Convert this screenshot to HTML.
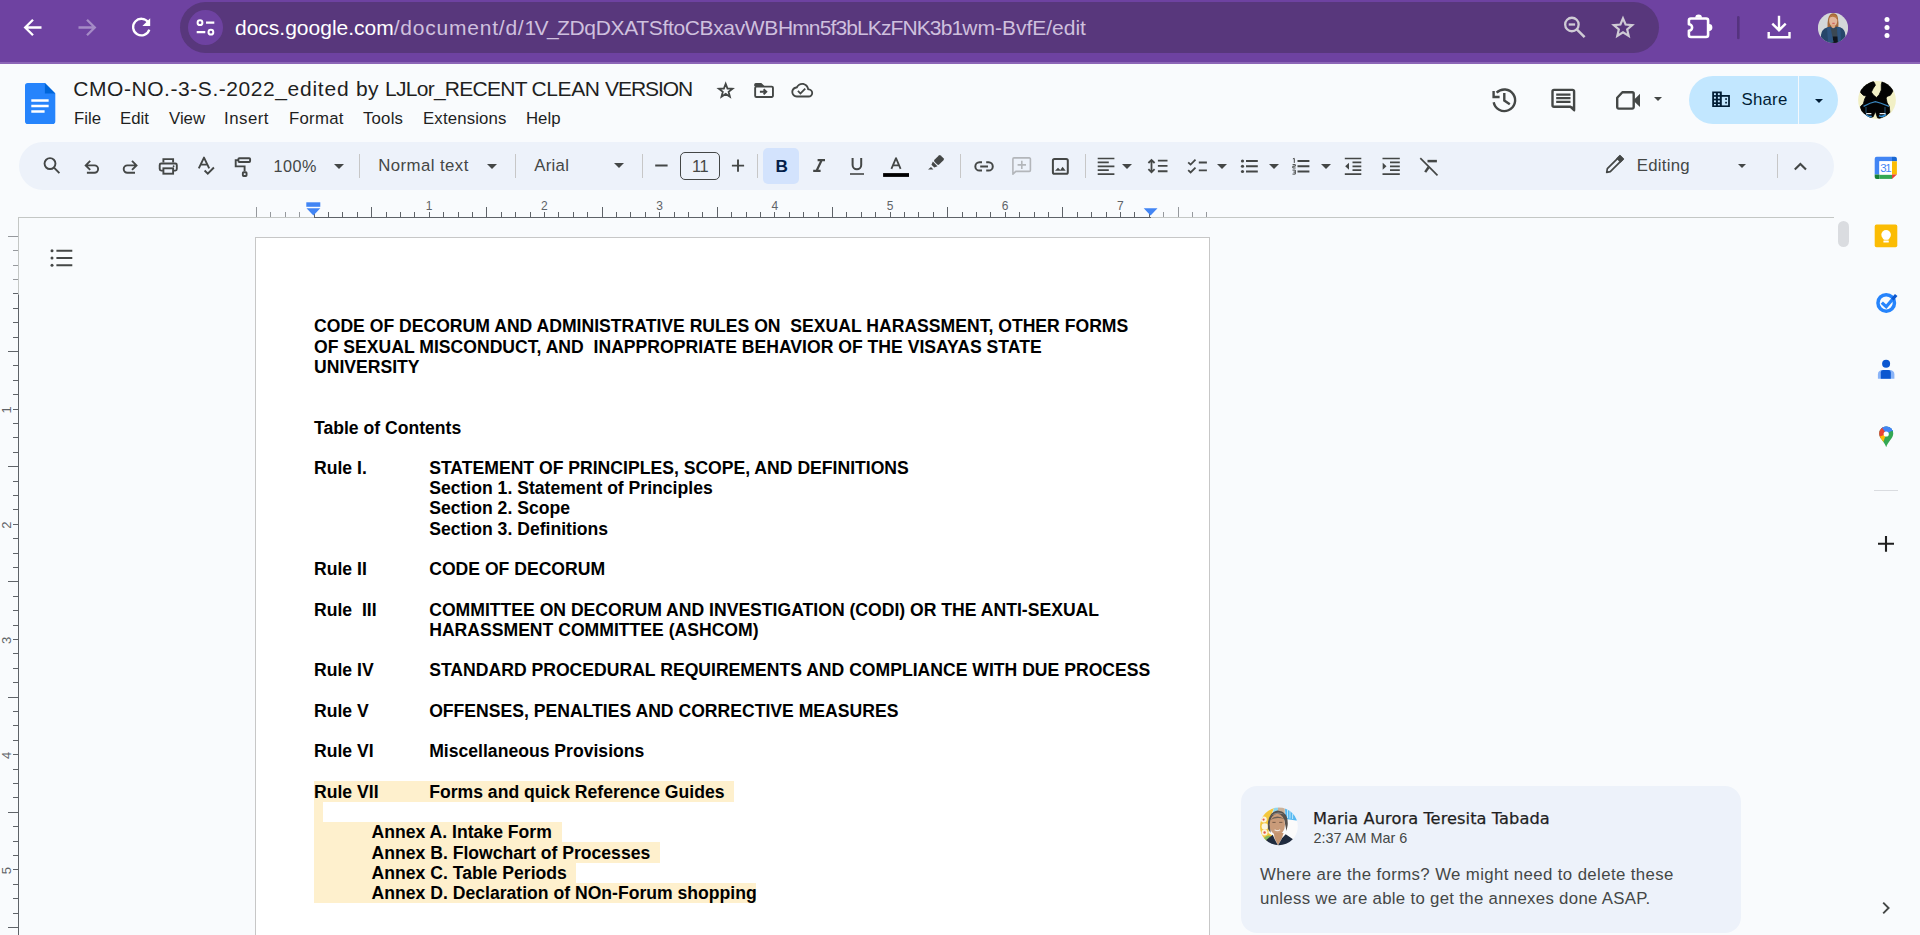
<!DOCTYPE html>
<html lang="en">
<head>
<meta charset="utf-8">
<title>CMO-NO.-3-S.-2022_edited by LJLor_RECENT CLEAN VERSION - Google Docs</title>
<style>
*{box-sizing:border-box;margin:0;padding:0}
html,body{width:1920px;height:935px;overflow:hidden;background:#f9fbfd;font-family:"Liberation Sans",sans-serif;color:#1f1f1f}
.abs{position:absolute}
svg{display:block;overflow:visible}
/* ---------- browser chrome ---------- */
#chrome{position:absolute;left:0;top:0;width:1920px;height:62px;background:#6e42a1}
#chromeline{position:absolute;left:0;top:62px;width:1920px;height:2px;background:#8c66b7}
#omni{position:absolute;left:180px;top:2px;width:1479px;height:51px;border-radius:26px;background:#58377c}
#siteinfo{position:absolute;left:188px;top:10px;width:35px;height:35px;border-radius:50%;background:#6e42a1}
#url{position:absolute;left:235px;top:14px;font-size:21px;line-height:28px;white-space:nowrap;color:#fff;letter-spacing:0}
#url span{color:#cfc0de}#url i{font-style:normal}
/* ---------- docs header ---------- */
#title{position:absolute;left:73.3px;top:75px;font-size:21px;white-space:pre;line-height:28px;white-space:nowrap;color:#1f1f1f}
.menu{position:absolute;top:108.8px;font-size:16.8px;line-height:20px;color:#1f1f1f;white-space:nowrap}
/* ---------- toolbar ---------- */
#tb{position:absolute;left:19px;top:142px;width:1815px;height:48px;border-radius:24px;background:#edf2fa}
.tbt{position:absolute;font-size:16.8px;line-height:20px;color:#444746;white-space:nowrap}
.sep{position:absolute;top:154px;width:1px;height:24px;background:#c7c7c7}
.caret{position:absolute;width:0;height:0;border-left:5px solid transparent;border-right:5px solid transparent;border-top:5px solid #444746}
/* ---------- document ---------- */
#page{position:absolute;left:255px;top:237px;width:955px;height:720px;background:#fff;border:1px solid #c7c7c7}
.dl{position:absolute;font-weight:bold;font-size:17.6px;line-height:20px;color:#000;white-space:pre}
.hl{position:absolute;background:#fef0cd}
/* ---------- comment ---------- */
#cbox{position:absolute;left:1241px;top:786px;width:500px;height:147px;border-radius:16px;background:#edf2fa}
</style>
</head>
<body>
<!-- ================= BROWSER CHROME ================= -->
<div id="chrome"></div>
<div id="chromeline"></div>
<div id="omni"></div>
<div id="siteinfo"></div>
<div id="url">docs.google.com<span><i style="letter-spacing:0.774px">/document/d/</i><i style="letter-spacing:-1.592px">1V_</i><i style="letter-spacing:-0.348px">ZDqDXATSftoCBxavWB</i><i style="letter-spacing:-0.884px">Hmn5f3bLKzFNK3b1</i><i style="letter-spacing:-0.000px">wm-BvfE/edit</i></span></div>
<svg class="abs" style="left:0;top:0" width="1920" height="64" viewBox="0 0 1920 64" fill="none" stroke-linecap="round" stroke-linejoin="round">
  <!-- back -->
  <path d="M41.5 27.5H25.5M33 19.7L25.2 27.5L33 35.3" stroke="#fff" stroke-width="2.3" stroke-linecap="butt" stroke-linejoin="miter"/>
  <!-- forward (disabled) -->
  <path d="M78.5 27.5H94.5M87 19.7L94.8 27.5L87 35.3" stroke="#a58bc6" stroke-width="2.3" stroke-linecap="butt" stroke-linejoin="miter"/>
  <!-- reload -->
  <path d="M148.2 22.3A8.3 8.3 0 1 0 149.3 29.6" stroke="#fff" stroke-width="2.3" stroke-linecap="butt"/>
  <path d="M150.2 18.2V26H142.4Z" fill="#fff" stroke="none"/>
  <!-- site info (tune) -->
  <circle cx="200" cy="22.7" r="2.4" stroke="#fff" stroke-width="2"/>
  <path d="M206 22.7H214.3M196.7 32.2H205.3" stroke="#fff" stroke-width="2.2" stroke-linecap="butt"/>
  <circle cx="210.9" cy="32.2" r="2.4" stroke="#fff" stroke-width="2"/>
  <!-- zoom out -->
  <circle cx="1571.9" cy="24.5" r="6.75" stroke="#cfcbd5" stroke-width="2.3"/>
  <path d="M1576.8 29.4L1584.6 37.2" stroke="#cfcbd5" stroke-width="2.5" stroke-linecap="butt"/>
  <path d="M1568.7 24.5H1575.1" stroke="#cfcbd5" stroke-width="2.3" stroke-linecap="butt"/>
  <!-- bookmark star -->
  <path d="M1623.0 18.4L1625.6 24.5L1632.2 25.1L1627.2 29.4L1628.7 35.9L1623.0 32.4L1617.3 35.9L1618.8 29.4L1613.8 25.1L1620.4 24.5Z" stroke="#cfcbd5" stroke-width="2.2" stroke-linejoin="miter" stroke-miterlimit="10"/>
  <!-- extensions puzzle -->
  <path d="M1688.9 24.3V20.5a2 2 0 0 1 2-2H1706.1a2 2 0 0 1 2 2V35a2 2 0 0 1-2 2H1690.9a2 2 0 0 1-2-2V30.7a3.2 3.2 0 0 0 0-6.4z" stroke="#fff" stroke-width="2.6"/><path d="M1695.2 17.8a3.4 3.4 0 0 1 6.8 0zM1709 24.1a3.4 3.4 0 0 1 0 6.8z" fill="#fff" stroke="none"/>
  <!-- separator -->
  <path d="M1738.3 17.2V38" stroke="#55337e" stroke-width="2.6"/>
  <!-- download -->
  <path d="M1779 15.8V29.5M1772.3 23.6L1779 30.2L1785.7 23.6" stroke="#fff" stroke-width="2.4" stroke-linecap="butt" stroke-linejoin="miter"/>
  <path d="M1768.7 32V37.3H1789.5V32" stroke="#fff" stroke-width="2.4" stroke-linecap="butt" stroke-linejoin="miter"/>
  <!-- menu dots -->
  <circle cx="1887" cy="19.6" r="2.5" fill="#fff"/><circle cx="1887" cy="27.6" r="2.5" fill="#fff"/><circle cx="1887" cy="35.6" r="2.5" fill="#fff"/>
  <!-- profile avatar -->
  <defs><clipPath id="av1"><circle cx="15" cy="14.900" r="15.100"/></clipPath></defs>
  <g clip-path="url(#av1)" transform="translate(1818 13)">
    <rect x="0" y="0" width="30" height="30" fill="#d4d7d9"/>
    <path d="M9.600 14.800Q9 4 12.500 1.200Q15 -.500 18 1Q21 3 20.300 14.800Z" fill="#a4683b"/>
    <ellipse cx="15.200" cy="7.700" rx="4.100" ry="5.600" fill="#e2b59b"/>
    <path d="M11 5.500Q12 1.500 16 1.800Q19 2.500 19.400 7Q17.500 3.500 14.500 3.800Q12 4 11 5.500Z" fill="#b5753f"/>
    <rect x="13.400" y="11.500" width="3.600" height="4" fill="#d9a583"/>
    <path d="M14.700 10.300H16.300" stroke="#c6353f" stroke-width="0.800"/>
    <path d="M3 30V22Q3.500 16 9 14.500L12.500 13.600L15.200 15.500L18.500 13.600L22.500 14.500Q27 16 27.400 22V30Z" fill="#27466a"/>
    <path d="M12.200 14.500Q15.200 16.500 19 14.500L20 24V30H14.500L13.500 24Z" fill="#3b4853"/>
    <path d="M14.600 23.500H20V30H15.500Z" fill="#10151c"/>
    <path d="M9 14.500L12.400 14L15.500 29H10Z" fill="#2f5480"/>
    <path d="M22.500 14.500L19 14L19.800 29H23Z" fill="#2f5480"/>
  </g>

</svg>


<!-- ================= DOCS HEADER ================= -->
<!-- docs logo -->
<svg class="abs" style="left:25.2px;top:83px" width="31" height="42" viewBox="0 0 31 42">
  <path d="M2.800 0H19.900L30.300 10.500V38.300A2.800 2.800 0 0 1 27.500 41.100H2.800A2.800 2.800 0 0 1 0 38.300V2.800A2.800 2.800 0 0 1 2.800 0Z" fill="#2684fc"/>
  <path d="M19.900 0L30.300 10.500H19.900Z" fill="#0066da"/>
  <path d="M6.300 17.600H23.650M6.300 22.900H23.650M6.300 28.400H19.600" stroke="#fff" stroke-width="2.500"/>
</svg>
<div id="title"><span style="letter-spacing:0.555px">CMO-NO.-3-S.-2022_</span><span style="letter-spacing:0.777px">edited </span><span style="letter-spacing:0.328px">by </span><span style="letter-spacing:-0.732px">LJLor_RECENT </span><span style="letter-spacing:-0.393px">CLEAN </span><span style="letter-spacing:-1.076px">VERSION</span></div>
<svg class="abs" style="left:0;top:64px" width="1920" height="78" viewBox="0 64 1920 78" fill="none" stroke="#444746" stroke-width="1.8" stroke-linejoin="round">
  <!-- star -->
  <path d="M725.7 83.7L727.5 88.5L732.5 88.7L728.6 91.8L729.9 96.7L725.7 93.9L721.5 96.7L722.8 91.8L718.9 88.7L723.9 88.5Z" stroke-linejoin="miter" stroke-miterlimit="10"/>
  <!-- move to folder -->
  <path d="M756.4 86.65H771.7A1.25 1.25 0 0 1 772.95 87.9V95.7A1.25 1.25 0 0 1 771.7 96.95H756.4A1.25 1.25 0 0 1 755.15 95.7V87.9A1.25 1.25 0 0 1 756.4 86.65Z" stroke-width="1.9"/>
  <path d="M754.2 87.5V84.4A1.5 1.5 0 0 1 755.7 82.9H761.3L764.4 86H754.2Z" fill="#444746" stroke="none"/>
  <path d="M759.9 91.8H766M763.6 89.2L766.3 91.8L763.6 94.4" stroke-width="1.9" stroke-linejoin="miter"/>
  <!-- cloud done -->
  <g transform="translate(791.4 79.3) scale(0.905)" fill="#444746" stroke="none"><path d="M19.35 10.04C18.67 6.59 15.64 4 12 4 9.11 4 6.6 5.64 5.35 8.04 2.34 8.36 0 10.91 0 14c0 3.31 2.69 6 6 6h13c2.76 0 5-2.24 5-5 0-2.64-2.05-4.78-4.65-4.96zM19 18H6c-2.21 0-4-1.79-4-4 0-2.05 1.53-3.76 3.56-3.97l1.07-.11.5-.95C8.08 7.14 9.94 6 12 6c2.62 0 4.88 1.86 5.39 4.43l.3 1.5 1.53.11c1.56.1 2.78 1.41 2.78 2.96 0 1.65-1.35 3-3 3zm-9-3.82l-2.09-2.09L6.5 13.5 10 17l6.01-6.01-1.41-1.41z"/></g>
</svg>
<div class="menu" style="left:74px">File</div>
<div class="menu" style="left:120px">Edit</div>
<div class="menu" style="left:169px">View</div>
<div class="menu" style="left:224px;letter-spacing:.5px">Insert</div>
<div class="menu" style="left:289px;letter-spacing:.25px">Format</div>
<div class="menu" style="left:363px;letter-spacing:.2px">Tools</div>
<div class="menu" style="left:423px;letter-spacing:.15px">Extensions</div>
<div class="menu" style="left:526px">Help</div>
<svg class="abs" style="left:1480px;top:64px" width="440" height="78" viewBox="1480 64 440 78" fill="none" stroke="#444746" stroke-width="2.4">
  <!-- history -->
  <path d="M1496.6 92.7A10.8 10.8 0 1 1 1493.7 102.2"/>
  <path d="M1493.6 91V97H1499.6" stroke-linejoin="miter"/>
  <path d="M1504.3 92.9V100.6L1509.8 104.2"/>
  <!-- comments -->
  <path d="M1554 89.9H1572.6A1.5 1.5 0 0 1 1574.1 91.4V110.2L1570.6 106.8H1554A1.5 1.5 0 0 1 1552.5 105.3V91.4A1.5 1.5 0 0 1 1554 89.9Z" stroke-linejoin="round"/>
  <path d="M1574.6 111.4L1569.6 106.4H1574.6Z" fill="#444746" stroke="none"/>
  <path d="M1556.2 94.6H1570.5M1556.2 98.2H1570.5M1556.2 101.8H1570.5" stroke-width="2.2"/>
  <!-- meet camera -->
  <path d="M1622.4 92.2H1632.2A1.5 1.5 0 0 1 1633.7 93.7V107.1A1.5 1.5 0 0 1 1632.2 108.6H1618.7A1.5 1.5 0 0 1 1617.2 107.1V97.8Z" stroke-linejoin="round"/>
  <path d="M1640 93.8V107.1L1633.2 100.4Z" fill="#444746" stroke="none"/>
  <path d="M1654 97H1662L1658 101.1Z" fill="#444746" stroke="none"/>
</svg>
<!-- share button -->
<div class="abs" style="left:1689px;top:76px;width:149px;height:48px;border-radius:24px;background:#c2e7ff"></div>
<div class="abs" style="left:1798px;top:76px;width:1px;height:48px;background:#f4f8fc"></div>
<svg class="abs" style="left:1712px;top:91px" width="18" height="16" viewBox="0 0 18 16">
  <path d="M0.2 0.4H9.8V4H17.9V15.9H0.2Z" fill="#001d35"/>
  <g fill="#c2e7ff">
    <rect x="2" y="2.2" width="1.9" height="1.9"/><rect x="5.9" y="2.2" width="1.9" height="1.9"/>
    <rect x="2" y="5.8" width="1.9" height="1.9"/><rect x="5.9" y="5.8" width="1.9" height="1.9"/>
    <rect x="2" y="9.4" width="1.9" height="1.9"/><rect x="5.9" y="9.4" width="1.9" height="1.9"/>
    <rect x="2" y="13" width="1.9" height="1.4"/><rect x="5.9" y="13" width="1.9" height="1.4"/>
    <rect x="9.8" y="5.8" width="6.3" height="8.6"/>
  </g>
  <g fill="#001d35"><rect x="13.2" y="7.2" width="1.7" height="1.7"/><rect x="13.2" y="10.8" width="1.7" height="1.7"/></g>
</svg>
<div class="abs" style="left:1741.5px;top:90.3px;font-size:16.8px;line-height:20px;letter-spacing:.25px;color:#001d35;white-space:nowrap">Share</div>
<div class="caret" style="left:1815.4px;top:98.8px;border-left-width:4px;border-right-width:4px;border-top:4.4px solid #001d35"></div>
<!-- account avatar -->
<svg class="abs" style="left:1858px;top:81px" width="38" height="38" viewBox="0 0 38 38">
  <defs><clipPath id="av2"><circle cx="19" cy="19" r="18.9"/></clipPath></defs>
  <g clip-path="url(#av2)">
    <rect width="38" height="38" fill="#f2f0c6"/>
    <path d="M14.7 0L2.7 7V11.7L5.3 14.3L8.3 15.1L6.7 18L5.3 22.9L2.4 25.6L3.5 31L7.2 34.1L11.5 36.8L15.2 35.7L17.4 30.4L19.5 36.8L21.7 37.6L28 34.6L31.8 31.4L31.3 25.6L29.1 21.8L28.1 17L29.1 15.4L32.3 14.3L35 10L33 5L24.3 0L23.3 3.6V9L21.1 13.8L18.4 16.5L15.2 13.8L13.4 11.1L15.2 7.4L17.4 4.2L16.3 1.5Z" fill="#030303" stroke="#030303" stroke-width="0.8" stroke-linejoin="round"/>
    <path d="M5.6 25.4L12 22.3L17.4 20.6L23 22.3L31 25.4" stroke="#3a86bd" stroke-width="1.2" fill="none"/>
    <path d="M8 26V32M27 26V32" stroke="#2d6a96" stroke-width="0.8" fill="none"/>
    <path d="M7.5 33.6Q10.5 36.6 13.6 35.2M21 34.6Q24.5 36.8 28 33.4" stroke="#2f8fd6" stroke-width="1.7" fill="none"/>
    <path d="M8.2 32.6H13.4M21.6 32.6H27.6" stroke="#e8edf2" stroke-width="1.3" fill="none"/>
  </g>
</svg>


<!-- ================= TOOLBAR ================= -->
<div id="tb"></div>
<div class="abs" style="left:763px;top:148px;width:36px;height:36px;border-radius:5px;background:#d3e3fd"></div>
<svg class="abs" style="left:19px;top:142px" width="1815" height="48" viewBox="19 142 1815 48" fill="none" stroke="#444746" stroke-width="1.9">
  <!-- search -->
  <circle cx="50" cy="163.6" r="5.45"/><path d="M54 167.6L59.4 173.2"/>
  <!-- undo -->
  <path d="M90.2 160.9L85.7 165.4L90.2 169.9M86 165.4H94.4A3.7 3.7 0 0 1 94.4 172.8H86.9"/>
  <!-- redo -->
  <path d="M132 160.9L136.5 165.4L132 169.9M136.2 165.4H127.4A3.7 3.7 0 0 0 127.4 172.8H135"/>
  <!-- print -->
  <path d="M163.4 162.6V159.1H173.1V162.6"/>
  <path d="M162.9 170.6H161.2A1.5 1.5 0 0 1 159.7 169.1V165A1.5 1.5 0 0 1 161.2 163.5H175.3A1.5 1.5 0 0 1 176.8 165V169.1A1.5 1.5 0 0 1 175.3 170.6H173.6"/>
  <rect x="163.4" y="168.3" width="9.7" height="5.4"/>
  <circle cx="173.6" cy="166.2" r="0.9" fill="#444746" stroke="none"/>
  <!-- spellcheck -->
  <path d="M198.8 168.3L204 157.6L209.2 168.3M200.6 164.6H207.4" stroke-linejoin="round"/>
  <path d="M204.6 170.5L207.8 173.6L213.9 167.5"/>
  <!-- paint format -->
  <rect x="238.4" y="158.2" width="11.7" height="3.8" rx="0.9"/>
  <path d="M238.4 160.1H235.7V166.4H244.6V171.2"/>
  <rect x="242.85" y="172.2" width="3.7" height="3.8" rx="0.7"/>
  <!-- minus / plus -->
  <path d="M655.2 165.5H667.6M731.9 165.6H744.1M738 159.6V171.7"/>
  <!-- italic -->
  <path d="M817.6 160.2H825M813.2 170.8H820.6M821.6 160.2L816.6 170.8" stroke-width="2.2"/>
  <!-- underline -->
  <path d="M852.6 157.9V165A4.3 4.3 0 0 0 861.2 165V157.9" stroke-width="2"/>
  <path d="M850 174H864" stroke-width="1.6"/>
  <!-- text colour -->
  <path d="M891.4 168.8L896 158.2L900.6 168.8M893 165.3H899" stroke-width="1.8" stroke-linejoin="round"/>
  <rect x="883.1" y="173.1" width="25.9" height="3.8" fill="#000" stroke="none"/>
  <!-- highlighter -->
  <g transform="translate(937.5 161.5) rotate(45)" fill="#444746" stroke="none">
    <rect x="-3.3" y="-6.5" width="6.6" height="8.8" rx="1.3"/>
    <path d="M-3.3 3.3H3.3L2 6.6H-2Z"/>
  </g>
  <path d="M928 169.4H933.4L931 167Z" fill="#444746" stroke="none"/>
  <!-- link -->
  <path d="M982 162.2H979.5A4.17 4.17 0 0 0 979.5 170.55H982M986.2 162.2H988.6A4.17 4.17 0 0 1 988.6 170.55H986.2M980.2 166.4H988" stroke-width="2"/>
  <!-- add comment (disabled) -->
  <g stroke="#b3b6ba" stroke-width="1.6">
    <path d="M1012.9 174.2V159A1.1 1.1 0 0 1 1014 157.9H1029.3A1.1 1.1 0 0 1 1030.4 159V170.3A1.1 1.1 0 0 1 1029.3 171.4H1015.8Z" stroke-linejoin="round"/>
    <path d="M1017.6 164.9H1026M1021.8 160.7V169.1"/>
  </g>
  <!-- image -->
  <rect x="1052.9" y="158.9" width="14.9" height="14.9" rx="1.6" stroke-width="2"/>
  <path d="M1055 170.8L1058 167.8L1060.3 170L1062.6 166.8L1065.7 170.8Z" fill="#444746" stroke="none"/>
  <!-- align -->
  <path d="M1097.7 158.5H1114.4M1097.7 162.4H1108.8M1097.7 166.3H1114.4M1097.7 170.2H1108.8M1097.7 174.1H1114.4" stroke-width="1.7"/>
  <!-- line spacing -->
  <path d="M1151.5 160.4V171.8M1148.4 163L1151.5 159.9L1154.6 163M1148.4 169.2L1151.5 172.3L1154.6 169.2" stroke-width="1.8"/>
  <path d="M1157.9 160.6H1167.5M1157.9 165.9H1167.5M1157.9 171.2H1167.5"/>
  <!-- checklist -->
  <path d="M1188.2 162.3L1190.6 164.6L1195.5 159.7M1188.2 170.2L1190.6 172.5L1195.5 167.6M1198.8 162.5H1206.9M1198.8 170.4H1206.9" stroke-width="1.8"/>
  <!-- bullets -->
  <g fill="#444746" stroke="none"><circle cx="1242.5" cy="161" r="1.6"/><circle cx="1242.5" cy="166.25" r="1.6"/><circle cx="1242.5" cy="171.5" r="1.6"/></g>
  <path d="M1246 161H1257.8M1246 166.25H1257.8M1246 171.5H1257.8"/>
  <!-- numbered -->
  <path d="M1297.5 161H1309.4M1297.5 166.25H1309.4M1297.5 171.5H1309.4"/>
  <g stroke-width="1"><path d="M1292.9 158.9L1294.3 158.4V162.9M1292.6 164.6H1295.3V166.2H1292.8V168H1295.6M1292.5 170.1H1295.3V174.1H1292.5M1293.4 172.1H1295.3"/></g>
  <!-- outdent -->
  <path d="M1344.8 158.5H1361.3M1352.5 162.4H1361.3M1352.5 166.3H1361.3M1352.5 170.2H1361.3M1344.8 174.1H1361.3" stroke-width="1.7"/>
  <path d="M1349 162.8V169.8L1345.2 166.3Z" fill="#444746" stroke="none"/>
  <!-- indent -->
  <path d="M1382.5 158.5H1399.8M1390 162.4H1399.8M1390 166.3H1399.8M1390 170.2H1399.8M1382.5 174.1H1399.8" stroke-width="1.7"/>
  <path d="M1382.7 162.8V169.8L1386.5 166.3Z" fill="#444746" stroke="none"/>
  <!-- clear formatting -->
  <path d="M1420.3 158.1L1437.5 175.3" stroke-width="1.7"/>
  <path d="M1427.5 161.1H1436.9" stroke-width="2.5"/>
  <path d="M1428.6 167.3L1425.2 172.1" stroke-width="2.5"/>
  <!-- pencil -->
  <g transform="translate(1614.2 164.8) rotate(45)">
    <path d="M-2.1 -10.2H2.1V7.6L0 10.6L-2.1 7.6Z" stroke-width="1.7" stroke-linejoin="round"/>
    <rect x="-2.1" y="-10.2" width="4.2" height="3.4" fill="#444746"/>
  </g>
  <!-- collapse chevron -->
  <path d="M1794.8 169.6L1800.4 164L1806 169.6" stroke-width="2.1"/>
</svg>
<div class="tbt" style="left:273.6px;top:156px;font-size:16.2px;letter-spacing:.43px">100%</div>
<div class="tbt" style="left:378.3px;top:156px;letter-spacing:.42px">Normal text</div>
<div class="tbt" style="left:534.2px;top:156px;letter-spacing:.3px">Arial</div>
<div class="abs" style="left:680px;top:152px;width:40px;height:28px;border:1.2px solid #444746;border-radius:5px"></div>
<div class="tbt" style="left:680px;top:156px;width:40px;text-align:center;font-size:16.4px;letter-spacing:-.6px">11</div>
<div class="abs" style="left:775.6px;top:156.4px;font-size:17.2px;line-height:20px;font-weight:bold;color:#041e49">B</div>
<div class="tbt" style="left:1636.7px;top:156px;letter-spacing:.28px">Editing</div>
<div class="sep" style="left:359px"></div><div class="sep" style="left:515px"></div><div class="sep" style="left:642px"></div>
<div class="sep" style="left:757px"></div><div class="sep" style="left:960px"></div><div class="sep" style="left:1085px"></div><div class="sep" style="left:1777px"></div>
<div class="caret" style="left:333.6px;top:163.8px"></div>
<div class="caret" style="left:487.4px;top:163.8px"></div>
<div class="caret" style="left:614px;top:163.3px"></div>
<div class="caret" style="left:1122px;top:163.8px"></div>
<div class="caret" style="left:1216.9px;top:163.8px"></div>
<div class="caret" style="left:1268.8px;top:163.8px"></div>
<div class="caret" style="left:1321px;top:163.8px"></div>
<div class="caret" style="left:1738.2px;top:163.8px;border-left-width:4px;border-right-width:4px;border-top-width:4.4px"></div>


<!-- ================= RULERS ================= -->
<svg class="abs" style="left:0;top:196px" width="1840" height="739" viewBox="0 196 1840 739" fill="none" font-family="Liberation Sans, sans-serif" font-size="12" fill-rule="nonzero">
<path d="M18 217.5H1834" stroke="#c4c7c5" stroke-width="1"/>
<path d="M314 217.5H1151" stroke="#5f6368" stroke-width="1"/>
<path d="M18.5 217V935" stroke="#c4c7c5" stroke-width="1"/>
<path d="M18.5 294.6V935" stroke="#5f6368" stroke-width="1"/>
<path d="M256.5 207V217M270.5 212V217M285.5 212V217M299.5 212V217M1163.5 212V217M1178.5 207V217M1192.5 212V217M1206.5 212V217" stroke="#96999d" stroke-width="1"/>
<path d="M314.5 212V217M328.5 212V217M342.5 212V217M357.5 212V217M371.5 207V217M386.5 212V217M400.5 212V217M414.5 212V217M429.5 212V217M443.5 212V217M458.5 212V217M472.5 212V217M486.5 207V217M501.5 212V217M515.5 212V217M530.5 212V217M544.5 212V217M558.5 212V217M573.5 212V217M587.5 212V217M602.5 207V217M616.5 212V217M630.5 212V217M645.5 212V217M659.5 212V217M674.5 212V217M688.5 212V217M702.5 212V217M717.5 207V217M731.5 212V217M746.5 212V217M760.5 212V217M774.5 212V217M789.5 212V217M803.5 212V217M818.5 212V217M832.5 207V217M846.5 212V217M861.5 212V217M875.5 212V217M890.5 212V217M904.5 212V217M918.5 212V217M933.5 212V217M947.5 207V217M962.5 212V217M976.5 212V217M990.5 212V217M1005.5 212V217M1019.5 212V217M1034.5 212V217M1048.5 212V217M1062.5 207V217M1077.5 212V217M1091.5 212V217M1106.5 212V217M1120.5 212V217M1134.5 212V217M1149.5 212V217" stroke="#5f6368" stroke-width="1"/>
<path d="M8 236.5H18M13 250.5H18M13 265.5H18M13 279.5H18" stroke="#96999d" stroke-width="1"/>
<path d="M13 293.5H18M13 308.5H18M13 322.5H18M13 337.5H18M8 351.5H18M13 365.5H18M13 380.5H18M13 394.5H18M13 409.5H18M13 423.5H18M13 437.5H18M13 452.5H18M8 466.5H18M13 481.5H18M13 495.5H18M13 509.5H18M13 524.5H18M13 538.5H18M13 553.5H18M13 567.5H18M8 581.5H18M13 596.5H18M13 610.5H18M13 625.5H18M13 639.5H18M13 653.5H18M13 668.5H18M13 682.5H18M8 697.5H18M13 711.5H18M13 725.5H18M13 740.5H18M13 754.5H18M13 769.5H18M13 783.5H18M13 797.5H18M8 812.5H18M13 826.5H18M13 841.5H18M13 855.5H18M13 869.5H18M13 884.5H18M13 898.5H18M13 913.5H18M8 927.5H18" stroke="#5f6368" stroke-width="1"/>
<text x="429.2" y="209.6" text-anchor="middle" fill="#5f6368" stroke="none">1</text>
<text x="544.4" y="209.6" text-anchor="middle" fill="#5f6368" stroke="none">2</text>
<text x="659.6" y="209.6" text-anchor="middle" fill="#5f6368" stroke="none">3</text>
<text x="774.8" y="209.6" text-anchor="middle" fill="#5f6368" stroke="none">4</text>
<text x="890.0" y="209.6" text-anchor="middle" fill="#5f6368" stroke="none">5</text>
<text x="1005.2" y="209.6" text-anchor="middle" fill="#5f6368" stroke="none">6</text>
<text x="1120.4" y="209.6" text-anchor="middle" fill="#5f6368" stroke="none">7</text>
<text transform="translate(11.2 409.9) rotate(-90)" font-size="13" text-anchor="middle" fill="#5f6368" stroke="none">1</text>
<text transform="translate(11.2 525.1) rotate(-90)" font-size="13" text-anchor="middle" fill="#5f6368" stroke="none">2</text>
<text transform="translate(11.2 640.3) rotate(-90)" font-size="13" text-anchor="middle" fill="#5f6368" stroke="none">3</text>
<text transform="translate(11.2 755.5) rotate(-90)" font-size="13" text-anchor="middle" fill="#5f6368" stroke="none">4</text>
<text transform="translate(11.2 870.7) rotate(-90)" font-size="13" text-anchor="middle" fill="#5f6368" stroke="none">5</text>
<rect x="306.3" y="202.3" width="14" height="4.5" fill="#4285f4"/>
<path d="M306.5 208.2H320.3L313.4 215.4Z" fill="#4285f4"/>
<path d="M1143.7 208.2H1157.5L1150.6 215.4Z" fill="#4285f4"/>
<g fill="#444746"><circle cx="52" cy="250.8" r="1.5"/><circle cx="52" cy="258" r="1.5"/><circle cx="52" cy="265.2" r="1.5"/></g>
<path d="M56.4 250.8H72.3M56.4 258H72.3M56.4 265.2H72.3" stroke="#444746" stroke-width="2"/>
<rect x="1838" y="221" width="11" height="26" rx="5.5" fill="#dadce0"/>
</svg>

<!-- ================= PAGE ================= -->
<div id="page"></div>
<div class="hl" style="left:313.75px;top:781.3px;width:420.00px;height:20.50px"></div>
<div class="hl" style="left:313.75px;top:801.5px;width:9.50px;height:20.60px"></div>
<div class="hl" style="left:313.75px;top:821.8px;width:248.00px;height:20.60px"></div>
<div class="hl" style="left:313.75px;top:842.1px;width:345.75px;height:20.50px"></div>
<div class="hl" style="left:313.75px;top:862.3px;width:262.50px;height:20.50px"></div>
<div class="hl" style="left:313.75px;top:882.5px;width:442.50px;height:20.60px"></div>
<div class="dl" style="left:314px;top:316px">CODE OF DECORUM AND ADMINISTRATIVE RULES ON  SEXUAL HARASSMENT, OTHER FORMS</div>
<div class="dl" style="left:314px;top:337px">OF SEXUAL MISCONDUCT, AND  INAPPROPRIATE BEHAVIOR OF THE VISAYAS STATE</div>
<div class="dl" style="left:314px;top:357px">UNIVERSITY</div>
<div class="dl" style="left:314px;top:418px">Table of Contents</div>
<div class="dl" style="left:314px;top:458px">Rule I.</div>
<div class="dl" style="left:429.2px;top:458px">STATEMENT OF PRINCIPLES, SCOPE, AND DEFINITIONS</div>
<div class="dl" style="left:429.2px;top:478px">Section 1. Statement of Principles</div>
<div class="dl" style="left:429.2px;top:498px">Section 2. Scope</div>
<div class="dl" style="left:429.2px;top:519px">Section 3. Definitions</div>
<div class="dl" style="left:314px;top:559px">Rule II</div>
<div class="dl" style="left:429.2px;top:559px">CODE OF DECORUM</div>
<div class="dl" style="left:314px;top:600px">Rule  III</div>
<div class="dl" style="left:429.2px;top:600px">COMMITTEE ON DECORUM AND INVESTIGATION (CODI) OR THE ANTI-SEXUAL</div>
<div class="dl" style="left:429.2px;top:620px">HARASSMENT COMMITTEE (ASHCOM)</div>
<div class="dl" style="left:314px;top:660px">Rule IV</div>
<div class="dl" style="left:429.2px;top:660px">STANDARD PROCEDURAL REQUIREMENTS AND COMPLIANCE WITH DUE PROCESS</div>
<div class="dl" style="left:314px;top:701px">Rule V</div>
<div class="dl" style="left:429.2px;top:701px">OFFENSES, PENALTIES AND CORRECTIVE MEASURES</div>
<div class="dl" style="left:314px;top:741px">Rule VI</div>
<div class="dl" style="left:429.2px;top:741px">Miscellaneous Provisions</div>
<div class="dl" style="left:314px;top:782px">Rule VII</div>
<div class="dl" style="left:429.2px;top:782px">Forms and quick Reference Guides</div>
<div class="dl" style="left:371.6px;top:822px">Annex A. Intake Form</div>
<div class="dl" style="left:371.6px;top:843px">Annex B. Flowchart of Processes</div>
<div class="dl" style="left:371.6px;top:863px">Annex C. Table Periods</div>
<div class="dl" style="left:371.6px;top:883px">Annex D. Declaration of NOn-Forum shopping</div>

<!-- ================= COMMENT ================= -->
<div id="cbox"></div>
<svg class="abs" style="left:1260.1px;top:807.1px" width="38" height="39" viewBox="0 0 38 39">
  <defs><clipPath id="av3"><circle cx="18.900" cy="19.400" r="18.900"/></clipPath></defs>
  <g clip-path="url(#av3)">
    <rect width="38" height="39" fill="#fbfbfb"/>
    <path d="M0 0H14.500L12 6L9 12L8.500 26L13 29L6 34L0 39Z" fill="#f3c73d"/>
    <circle cx="3.800" cy="12.500" r="3" fill="#fbf4dc"/><circle cx="3.600" cy="12.600" r="1.100" fill="#e5564a"/>
    <circle cx="4.800" cy="19.500" r="3.200" fill="#fbf6e0"/>
    <circle cx="4.600" cy="25.500" r="3" fill="#fbf4dc"/><circle cx="4.600" cy="25.500" r="1.200" fill="#e5564a"/>
    <ellipse cx="7.200" cy="31" rx="3.400" ry="2" fill="#86b95f" transform="rotate(-25 7.200 31)"/>
    <path d="M14 0H18V5H13Z" fill="#8fd6ee"/>
    <path d="M18 0H24.800V6H18Z" fill="#c9b29b"/>
    <path d="M25 1H38V13.800L25.500 12Z" fill="#55b8f2"/>
    <path d="M27.500 2.500V11M30 3V11.500M32.600 4.500V12" stroke="#c8ecfb" stroke-width="0.900"/>
    <path d="M8 22Q6.600 6 17.500 3.600Q28.500 4.500 27.700 18L26.500 24L24 12L11 12L10.500 25.700Z" fill="#56514d"/>
    <path d="M11 8.500Q17.500 3 24.500 7.500Q18 5.500 11 8.500Z" fill="#8d8985"/>
    <ellipse cx="17.300" cy="17.400" rx="7.700" ry="10.600" fill="#c99b79"/>
    <path d="M10.200 13Q17 6.500 24.600 12.500Q17.500 9.500 10.200 13Z" fill="#6b5f55"/>
    <path d="M12.400 15.400H15.600M19.200 15.400H22.400" stroke="#6d5443" stroke-width="0.900"/>
    <path d="M14.600 22.700Q17.400 24.600 20.200 22.700" stroke="#f0e4dc" stroke-width="1.100" fill="none"/>
    <path d="M13.900 26H23.600L22 31L18 38.500L14.500 31Z" fill="#c4946f"/>
    <path d="M4 39L6.200 33L12.800 27.700L14.300 31.500L18 38.600L22.200 31L25.700 27.200L33 32.300L36 39Z" fill="#1f2b3e"/>
  </g>
</svg>
<div class="abs" id="cname" style="left:1313px;top:808.7px;-webkit-text-stroke:.25px #1f1f1f;font-family:'DejaVu Sans','Liberation Sans',sans-serif;font-size:16.2px;line-height:20px;letter-spacing:.08px;color:#1f1f1f;white-space:nowrap">Maria Aurora Teresita Tabada</div>
<div class="abs" style="left:1313.4px;top:829.4px;font-size:14.4px;line-height:18px;letter-spacing:.03px;color:#444746;white-space:nowrap">2:37 AM Mar 6</div>
<div class="abs" id="cbody" style="left:1260px;top:863.4px;font-size:16.8px;line-height:24px;color:#444746;white-space:nowrap"><span style="letter-spacing:.39px">Where are the forms? We might need to delete these</span><br><span style="letter-spacing:.31px">unless we are able to get the annexes done ASAP.</span></div>
<svg class="abs" style="left:1880px;top:900px" width="12" height="16" viewBox="0 0 12 16" fill="none" stroke="#444746" stroke-width="1.9"><path d="M3.2 2.600L8.600 8L3.200 13.400"/></svg>


<!-- ================= SIDE PANEL ================= -->
<svg class="abs" style="left:1860px;top:150px" width="60" height="410" viewBox="1860 150 60 410">
  <!-- calendar -->
  <g>
    <path d="M1876.700 156.800H1892V161.300H1879.400V174.600H1874.700V158.800A2 2 0 0 1 1876.700 156.800Z" fill="#4285f4"/>
    <path d="M1892 156.800H1894.900A2 2 0 0 1 1896.900 158.800V161.300H1892Z" fill="#1967d2"/>
    <rect x="1892" y="161.300" width="4.900" height="13.300" fill="#fbbc04"/>
    <rect x="1879.400" y="174.600" width="12.600" height="4.300" fill="#34a853"/>
    <path d="M1874.700 174.600H1879.400V178.900H1876.700A2 2 0 0 1 1874.700 176.900Z" fill="#188038"/>
    <path d="M1892 174.600H1896.900L1892 178.900Z" fill="#ea4335"/>
    <rect x="1879.400" y="161.300" width="12.600" height="13.300" fill="#fff"/>
    <text x="1885.300" y="172.100" font-family="Liberation Sans, sans-serif" font-size="11.400" fill="#4285f4" text-anchor="middle" letter-spacing="-1.300">31</text>
  </g>
  <!-- keep -->
  <g>
    <rect x="1874.700" y="224.600" width="22.600" height="22.600" rx="1.800" fill="#fbbc04"/>
    <circle cx="1886.100" cy="234.800" r="4.800" fill="#fff"/>
    <rect x="1883.600" y="238" width="5" height="1.700" fill="#fff"/>
    <rect x="1883.400" y="240.600" width="5.400" height="1.800" rx="0.500" fill="#fff"/>
  </g>
  <!-- tasks -->
  <g fill="none">
    <circle cx="1886.200" cy="302.900" r="8.250" stroke="#2684fc" stroke-width="3.500"/>
    <path d="M1881.800 302.600L1886.200 306.700L1892.800 299" stroke="#2684fc" stroke-width="3.300" stroke-linejoin="miter"/>
    <path d="M1892.400 299.450L1896.200 295" stroke="#0b57d0" stroke-width="3.300"/>
  </g>
  <!-- contacts -->
  <g>
    <path d="M1877.900 378.800V374.600Q1877.900 370 1883 370H1889.300Q1894.400 370 1894.400 374.600V378.800Z" fill="#8ab4f8"/>
    <path d="M1880.800 378.800V372.400Q1880.800 370 1883.300 370H1888.300Q1890.800 370 1890.800 372.400V378.800Z" fill="#0b57d0"/>
    <circle cx="1886.100" cy="363.800" r="4" fill="#0b57d0"/>
  </g>
  <!-- maps -->
  <g>
    <defs><clipPath id="pin"><path d="M1886.200 426.500A7.050 7.050 0 0 1 1893.250 433.550C1893.250 438.400 1887.800 441.800 1886.200 447.200C1884.600 441.800 1879.150 438.400 1879.150 433.550A7.050 7.050 0 0 1 1886.200 426.500Z"/></clipPath></defs>
    <g clip-path="url(#pin)">
      <rect x="1878" y="426" width="17" height="22" fill="#34a853"/>
      <path d="M1878 426H1895V431L1890 430L1886.200 434Z" fill="#4285f4"/>
      <path d="M1888.500 426H1895V433L1890.500 430Z" fill="#1a73e8"/>
      <path d="M1878 426H1884L1886.200 434L1880 439L1878 437Z" fill="#ea4335"/>
      <path d="M1886.200 434L1882.500 444L1878 440V437.500Z" fill="#fbbc04"/>
      <path d="M1878 426H1895V429L1886.200 434L1882.800 428.500Z" fill="#4285f4"/>
    </g>
    <circle cx="1886.200" cy="434" r="2.600" fill="#fff"/>
  </g>
  <path d="M1874 490.500H1898" stroke="#dadce0" stroke-width="1"/>
  <path d="M1878 543.800H1894M1886 535.900V551.700" stroke="#1f1f1f" stroke-width="2.100"/>
</svg>

</body>
</html>
